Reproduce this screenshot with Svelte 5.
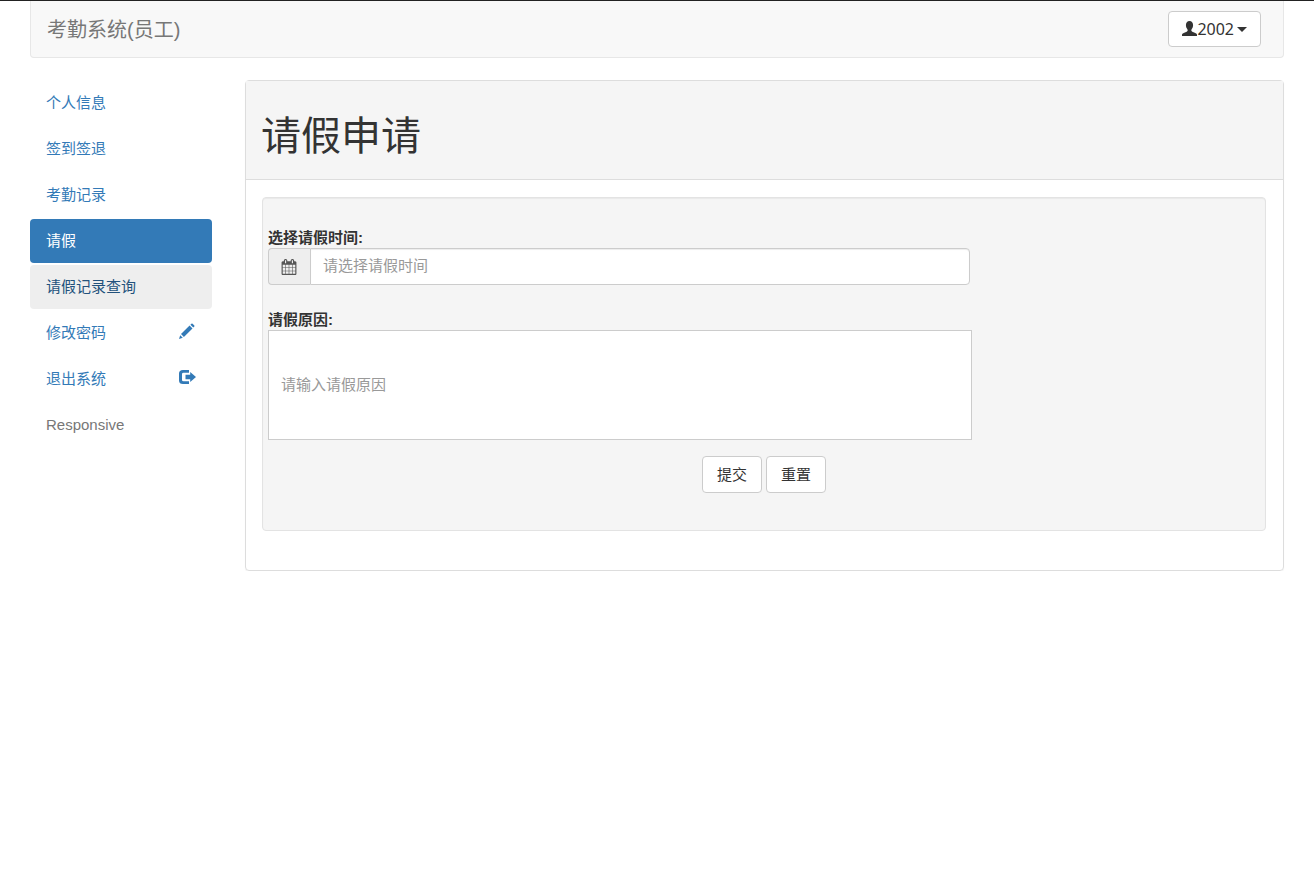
<script lang="ts">
  const links = [
    { text: '个人信息', state: '', icon: '' },
    { text: '签到签退', state: '', icon: '' },
    { text: '考勤记录', state: '', icon: '' },
    { text: '请假', state: 'active', icon: '' },
    { text: '请假记录查询', state: 'hovered', icon: '' },
    { text: '修改密码', state: '', icon: 'pencil' },
    { text: '退出系统', state: '', icon: 'log-out' },
    { text: 'Responsive', state: 'disabled', icon: '' },
  ];

  let leaveTime = $state('');
  let reason = $state('');
</script>

<div class="page">
  <header class="navbar">
    <span class="brand">考勤系统(员工)</span>
    <button type="button" class="btn user">
      <svg width="15" height="16" viewBox="0 0 16 16" preserveAspectRatio="none" aria-hidden="true">
        <path d="M8 0C5.500 0 4.200 1.700 4.200 4c0 1.500.3 2.300.7 3 .5.800 1.200 1.500 1.200 2.300 0 .7-.4 1.100-1.100 1.400L1.800 12C.6 12.500 0 13 0 14v1h16v-1c0-1-.6-1.500-1.800-2L11 10.700c-.7-.3-1.100-.7-1.100-1.400 0-.8.7-1.500 1.200-2.300.4-.7.7-1.500.7-3C11.800 1.700 10.500 0 8 0z" />
      </svg>
      <span>2002</span>
      <span class="caret"></span>
    </button>
  </header>

  <div class="columns">
    <nav>
      <ul>
        {#each links as link}
          <li>
            <a href="#top" class={link.state}>
              <span>{link.text}</span>
              {#if link.icon === 'pencil'}
                <svg width="17" height="20" viewBox="0 0 17 20" aria-hidden="true">
                  <path d="M12.400.7q.6-.6 1.200 0l1.700 1.700q.6.600 0 1.200l-1 1-2.900-2.900zM10.600 2.500l2.900 2.900-8.600 8.600L2 11.100zM1.200 12.200l2.600 2.600L0 16z" />
                </svg>
              {:else if link.icon === 'log-out'}
                <svg width="17" height="20" viewBox="0 0 17 20" aria-hidden="true">
                  <path d="M10 1H4Q0 1 0 4.500v7Q0 15 4 15H10v-2.700H4.500Q3 12.300 3 11V5Q3 3.700 4.500 3.700H10zM11.200 3l5.800 5-5.800 5V10.300H6.500V5.700h4.700z" />
                </svg>
              {/if}
            </a>
          </li>
        {/each}
      </ul>
    </nav>

    <main class="panel">
      <div class="panel-heading">
        <h1>请假申请</h1>
      </div>
      <div class="panel-body">
        <form class="well">
          <label for="leave-time">选择请假时间:</label>
          <div class="input-group">
            <span class="addon">
              <svg width="16" height="16" viewBox="0 0 1792 1792" aria-hidden="true">
                <path d="M192 1664h288v-288h-288v288zm352 0h320v-288h-320v288zm-352-352h288v-320h-288v320zm352 0h320v-320h-320v320zm-352-384h288v-288h-288v288zm736 736h320v-288h-320v288zm-384-736h320v-288h-320v288zm768 736h288v-288h-288v288zm-384-352h320v-320h-320v320zm-352-864v-288q0-13-9.500-22.500t-22.500-9.500h-64q-13 0-22.500 9.500t-9.500 22.500v288q0 13 9.500 22.500t22.500 9.500h64q13 0 22.500-9.500t9.500-22.500zm736 864h288v-320h-288v320zm-384-384h320v-288h-320v288zm384 0h288v-288h-288v288zm32-480v-288q0-13-9.500-22.500t-22.500-9.500h-64q-13 0-22.500 9.500t-9.500 22.500v288q0 13 9.500 22.500t22.500 9.500h64q13 0 22.500-9.500t9.500-22.500zm384-64v1280q0 52-38 90t-90 38h-1408q-52 0-90-38t-38-90v-1280q0-52 38-90t90-38h128v-96q0-66 47-113t113-47h64q66 0 113 47t47 113v96h384v-96q0-66 47-113t113-47h64q66 0 113 47t47 113v96h128q52 0 90 38t38 90z" />
              </svg>
            </span>
            <input id="leave-time" type="text" placeholder="请选择请假时间" bind:value={leaveTime} />
          </div>
          <label for="reason">请假原因:</label>
          <input id="reason" class="reason" type="text" placeholder="请输入请假原因" bind:value={reason} />
          <div class="actions">
            <button type="button" class="btn">提交</button>
            <button type="reset" class="btn">重置</button>
          </div>
        </form>
      </div>
    </main>
  </div>
</div>

<style>
  :global(body) {
    background: #fff;
  }
  .page,
  .btn,
  input {
    font-family: 'Liberation Sans', 'Noto Sans CJK SC', sans-serif;
    font-size: 15px;
    line-height: 22px;
    color: #333;
  }
  .page,
  .page * {
    box-sizing: border-box;
  }
  .page {
    border-top: 1px solid #222;
    padding: 0 30px;
  }
  svg {
    fill: currentColor;
    flex: none;
  }
  .navbar {
    display: flex;
    justify-content: space-between;
    align-items: center;
    height: 57px;
    padding: 0 22px 0 16px;
    background: #f8f8f8;
    border: 1px solid #e7e7e7;
    border-top: 0;
    border-radius: 0 0 4px 4px;
  }
  .brand {
    padding-top: 2px;
    font-size: 20px;
    color: #777;
  }
  .btn {
    height: 37px;
    padding: 0 14px;
    background: #fff;
    border: 1px solid #ccc;
    border-radius: 4px;
    cursor: pointer;
  }
  .user {
    display: flex;
    align-items: center;
    height: 36px;
    padding: 0 13px;
    font-family: 'Noto Sans', sans-serif;
    font-size: 16px;
  }
  .caret {
    margin-left: 3px;
    border-top: 5px solid;
    border-left: 5px solid transparent;
    border-right: 5px solid transparent;
  }
  .columns {
    display: grid;
    grid-template-columns: 182px 1fr;
    gap: 33px;
    align-items: start;
    padding-top: 22px;
  }
  ul {
    display: flex;
    flex-direction: column;
    gap: 2px;
    margin: 0;
    padding: 1px 0 0;
    list-style: none;
  }
  a {
    display: flex;
    justify-content: space-between;
    align-items: center;
    height: 44px;
    padding: 0 16px;
    border-radius: 4px;
    color: #337ab7;
    text-decoration: none;
  }
  .active {
    color: #fff;
    background: #337ab7;
  }
  .hovered {
    color: #23527c;
    background: #eee;
  }
  .disabled {
    color: #777;
  }
  .panel {
    border: 1px solid #ddd;
    border-radius: 4px;
    box-shadow: 0 1px 1px rgba(0, 0, 0, 0.05);
  }
  .panel-heading {
    padding: 33px 15px 21px;
    background: #f5f5f5;
    border-bottom: 1px solid #ddd;
  }
  h1 {
    margin: 0;
    font-size: 40px;
    line-height: 44px;
    font-weight: 400;
  }
  .panel-body {
    padding: 17px 17px 39px 16px;
  }
  .well {
    padding: 29px 5px 37px;
    background: #f5f5f5;
    border: 1px solid #e3e3e3;
    border-radius: 4px;
    box-shadow: inset 0 1px 1px rgba(0, 0, 0, 0.05);
  }
  label {
    display: block;
    line-height: 21px;
    font-weight: 700;
  }
  .input-group {
    display: flex;
    width: calc(71% - 2px);
    height: 37px;
    margin-bottom: 24px;
  }
  .addon {
    display: flex;
    align-items: center;
    justify-content: center;
    width: 42px;
    padding-right: 1px;
    color: #555;
    background: #eee;
    border: 1px solid #ccc;
    border-right: 0;
    border-radius: 4px 0 0 4px;
  }
  input {
    flex: 1;
    min-width: 0;
    padding: 0 12px 2px;
    background: #fff;
    border: 1px solid #ccc;
    border-radius: 0 4px 4px 0;
    box-shadow: inset 0 1px 1px rgba(0, 0, 0, 0.075);
  }
  input::placeholder {
    color: #999;
  }
  .reason {
    display: block;
    width: 71%;
    height: 110px;
    border-radius: 0;
    box-shadow: none;
  }
  .actions {
    display: flex;
    justify-content: center;
    gap: 4px;
    margin-top: 16px;
  }
</style>
